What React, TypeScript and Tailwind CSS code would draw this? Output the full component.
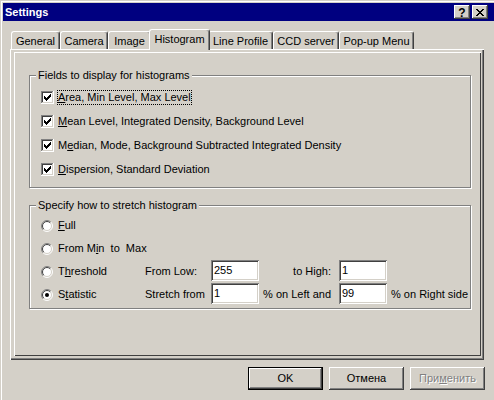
import type { ReactNode } from 'react';

const U = ({ children }: { children: ReactNode }) => (
    <span className="underline underline-offset-[1px]">{children}</span>
);

// classic sunken checkbox, 13x13
const CheckBox = () => {
    const check: [number, number][] = [
        [3, 5],
        [4, 6],
        [5, 7],
        [6, 6],
        [7, 5],
        [8, 4],
        [9, 3],
    ];
    return (
        <svg width="13" height="13" shapeRendering="crispEdges" className="block shrink-0">
            <rect x="0" y="0" width="13" height="13" fill="#fff" />
            <rect x="0" y="0" width="12" height="1" fill="#808080" />
            <rect x="0" y="0" width="1" height="12" fill="#808080" />
            <rect x="1" y="1" width="10" height="1" fill="#404040" />
            <rect x="1" y="1" width="1" height="10" fill="#404040" />
            <rect x="1" y="11" width="11" height="1" fill="#d4d0c8" />
            <rect x="11" y="1" width="1" height="11" fill="#d4d0c8" />
            {check.map(([x, y]) => (
                <rect key={x} x={x} y={y} width="1" height="3" fill="#000" />
            ))}
        </svg>
    );
};

const Radio = ({ on }: { on?: boolean }) => (
    <svg width="12" height="12" className="block shrink-0">
        <circle cx="6" cy="6" r="5" fill="#fff" />
        <path d="M2.111 9.889 A5.5 5.5 0 0 1 9.889 2.111" stroke="#808080" fill="none" />
        <path d="M9.889 2.111 A5.5 5.5 0 0 1 2.111 9.889" stroke="#fff" fill="none" />
        <path d="M2.818 9.182 A4.5 4.5 0 0 1 9.182 2.818" stroke="#404040" fill="none" />
        <path d="M9.182 2.818 A4.5 4.5 0 0 1 2.818 9.182" stroke="#d4d0c8" fill="none" />
        {on && <circle cx="6" cy="6" r="2" fill="#000" />}
    </svg>
);

const Field = ({ value }: { value: string }) => (
    <div className="w-[48px] h-[21px] self-start bg-white pl-[3px] flex items-center shadow-[inset_1px_1px_#808080,inset_-1px_-1px_#fff,inset_2px_2px_#404040,inset_-2px_-2px_#d4d0c8]">
        {value}
    </div>
);

const Btn = ({ children, def, disabled }: { children: ReactNode; def?: boolean; disabled?: boolean }) => (
    <div
        className={`w-[75px] h-[23px] flex items-center justify-center ${
            def
                ? 'shadow-[inset_0_0_0_1px_#000,inset_-2px_-2px_#404040,inset_2px_2px_#fff,inset_-3px_-3px_#808080]'
                : 'shadow-[inset_-1px_-1px_#404040,inset_1px_1px_#fff,inset_-2px_-2px_#808080]'
        } ${disabled ? 'text-[#808080] [text-shadow:1px_1px_0_#fff]' : ''}`}
    >
        {children}
    </div>
);

const tabs = [
    { label: 'General', w: 'w-[49px]' },
    { label: 'Camera', w: 'w-[48px]' },
    { label: 'Image', w: 'w-[43px]' },
    { label: 'Histogram', w: 'w-[61px]', active: true },
    { label: 'Line Profile', w: 'w-[65px]' },
    { label: 'CCD server', w: 'w-[66px]' },
    { label: 'Pop-up Menu', w: 'w-[75px]' },
];

const closeGlyph: [number, number[]][] = [
    [0, [0, 1, 6, 7]],
    [1, [1, 2, 5, 6]],
    [2, [2, 3, 4, 5]],
    [3, [3, 4]],
    [4, [2, 3, 4, 5]],
    [5, [1, 2, 5, 6]],
    [6, [0, 1, 6, 7]],
];

const capBtn =
    'w-[16px] h-[14px] bg-[#d4d0c8] flex items-center justify-center shadow-[inset_-1px_-1px_#404040,inset_1px_1px_#fff,inset_-2px_-2px_#808080]';

export default function App() {
    return (
        <div className="w-[494px] h-[400px] overflow-hidden bg-[#d4d0c8] text-black text-[11px] leading-[13px] font-['Liberation_Sans',Arial,sans-serif]">
            <div className="w-[494px] h-[400px] pt-[3px] pl-[3px] shadow-[inset_1px_1px_#d4d0c8,inset_2px_2px_#fff]">
                {/* title bar */}
                <div className="h-[18px] bg-[#000080] flex items-center pl-[2px] pr-[6px]">
                    <span className="font-bold text-white">Settings</span>
                    <div className="ml-auto flex gap-[2px]">
                        <div className={capBtn}>
                            <span className="font-bold text-[12px] leading-[12px] pt-[1px]">?</span>
                        </div>
                        <div className={capBtn}>
                            <svg width="8" height="7" shapeRendering="crispEdges">
                                {closeGlyph.flatMap(([y, xs]) =>
                                    xs.map((x) => <rect key={`${x}-${y}`} x={x} y={y} width="1" height="1" fill="#000" />)
                                )}
                            </svg>
                        </div>
                    </div>
                </div>

                <div className="pl-[7px]">
                    {/* tabs */}
                    <div className="mt-[8px] ml-[1px] h-[20px] flex items-end">
                        {tabs.map((t) =>
                            t.active ? (
                                <div
                                    key={t.label}
                                    className={`${t.w} h-[21px] -mx-[2px] -mb-[1px] relative z-10 bg-[#d4d0c8] rounded-t-[3px] border-t border-l border-white border-r border-r-[#404040] shadow-[inset_-1px_0_#808080] flex items-center justify-center pb-[1px]`}
                                >
                                    {t.label}
                                </div>
                            ) : (
                                <div
                                    key={t.label}
                                    className={`${t.w} h-[18px] rounded-t-[3px] border-t border-l border-white border-r border-r-[#404040] shadow-[inset_-1px_0_#808080] flex items-center justify-center pt-[1px]`}
                                >
                                    {t.label}
                                </div>
                            )
                        )}
                    </div>

                    {/* tab panel */}
                    <div className="w-[474px] h-[311px] pt-[3px] pl-[4px] shadow-[inset_1px_1px_#fff,inset_-1px_-1px_#404040,inset_-2px_-2px_#808080]">
                        <div className="w-[467px] h-[304px] flex flex-col shadow-[inset_1px_1px_#fff,inset_-1px_-1px_#404040]">
                            {/* fields group */}
                            <div className="ml-[15px] mt-[23px] w-[442px] h-[113px] border border-[#808080] shadow-[inset_1px_1px_#fff,1px_1px_#fff] flex flex-col">
                                <span className="-mt-[7px] ml-[6px] self-start bg-[#d4d0c8] px-[2px]">
                                    Fields to display for histograms
                                </span>
                                <div className="mt-[8px] ml-[11px] flex flex-col gap-[9px]">
                                    <div className="flex items-center">
                                        <CheckBox />
                                        <span className="ml-[3px] border border-dotted border-black">
                                            <U>A</U>rea, Min Level, Max Level
                                        </span>
                                    </div>
                                    <div className="flex items-center">
                                        <CheckBox />
                                        <span className="ml-[3px] border border-transparent">
                                            <U>M</U>ean Level, Integrated Density, Background Level
                                        </span>
                                    </div>
                                    <div className="flex items-center">
                                        <CheckBox />
                                        <span className="ml-[3px] border border-transparent">
                                            M<U>e</U>dian, Mode, Background Subtracted Integrated Density
                                        </span>
                                    </div>
                                    <div className="flex items-center">
                                        <CheckBox />
                                        <span className="ml-[3px] border border-transparent">
                                            <U>D</U>ispersion, Standard Deviation
                                        </span>
                                    </div>
                                </div>
                            </div>

                            {/* stretch group */}
                            <div className="ml-[15px] mt-[17px] w-[442px] h-[104px] border border-[#808080] shadow-[inset_1px_1px_#fff,1px_1px_#fff] flex flex-col">
                                <span className="-mt-[7px] ml-[6px] self-start bg-[#d4d0c8] px-[2px]">
                                    Specify how to stretch histogram
                                </span>
                                <div className="mt-[2px] ml-[11px] flex flex-col">
                                    <div className="h-[23px] flex items-center">
                                        <Radio />
                                        <span className="ml-[4px] border border-transparent">
                                            <U>F</U>ull
                                        </span>
                                    </div>
                                    <div className="h-[23px] flex items-center">
                                        <Radio />
                                        <span className="ml-[4px] border border-transparent whitespace-pre">
                                            From M<U>i</U>n  to  Max
                                        </span>
                                    </div>
                                    <div className="h-[23px] flex items-center">
                                        <div className="w-[104px] flex items-center">
                                            <Radio />
                                            <span className="ml-[4px] border border-transparent">
                                                T<U>h</U>reshold
                                            </span>
                                        </div>
                                        <span className="w-[66px]">From Low:</span>
                                        <Field value="255" />
                                        <span className="w-[80px] text-right pr-[8px]">to High:</span>
                                        <Field value="1" />
                                    </div>
                                    <div className="h-[23px] flex items-center">
                                        <div className="w-[104px] flex items-center">
                                            <Radio on />
                                            <span className="ml-[4px] border border-transparent">
                                                S<U>t</U>atistic
                                            </span>
                                        </div>
                                        <span className="w-[66px]">Stretch from</span>
                                        <Field value="1" />
                                        <span className="w-[80px] text-right pr-[8px]">% on Left and</span>
                                        <Field value="99" />
                                        <span className="ml-[4px]">% on Right side</span>
                                    </div>
                                </div>
                            </div>
                        </div>
                    </div>

                    {/* buttons */}
                    <div className="mt-[7px] ml-[238px] flex gap-[6px]">
                        <Btn def>OK</Btn>
                        <Btn>Отмена</Btn>
                        <Btn disabled>
                            При<U>м</U>енить
                        </Btn>
                    </div>
                </div>
            </div>
        </div>
    );
}
